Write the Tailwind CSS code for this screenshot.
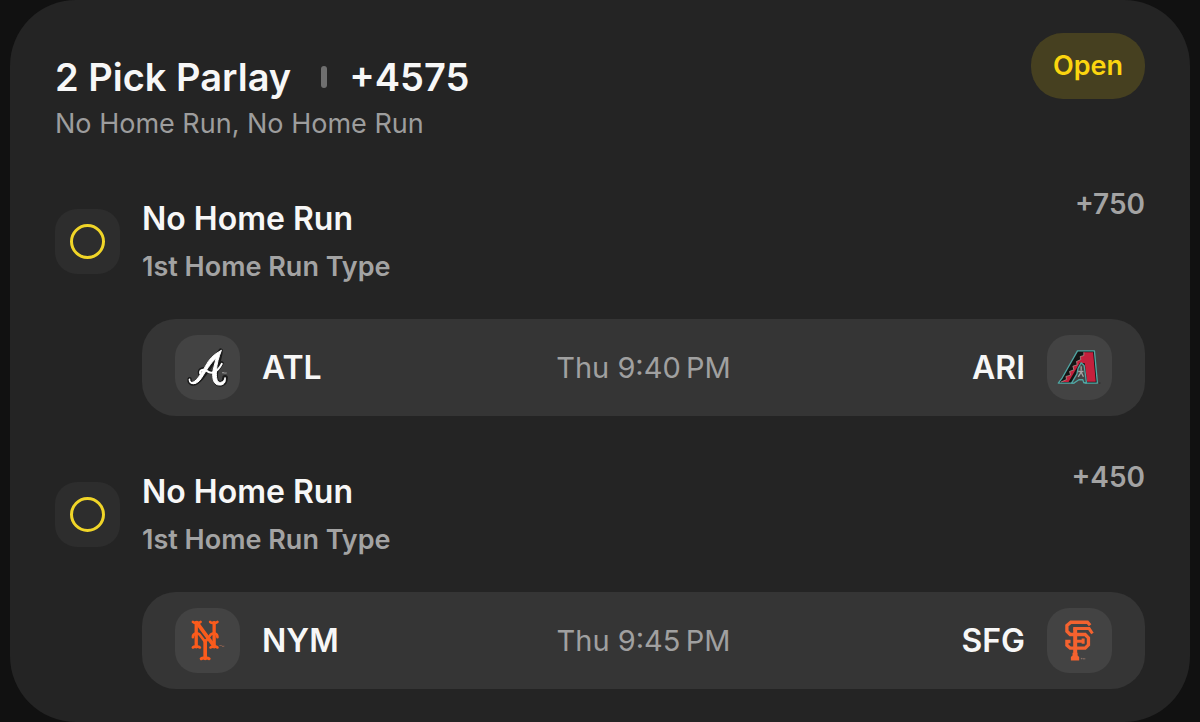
<!DOCTYPE html>
<html lang="en">
<head>
    <meta charset="utf-8">
    <meta name="viewport" content="width=device-width, initial-scale=1">
    <title>2 Pick Parlay</title>
    <script src="https://cdn.jsdelivr.net/npm/@tailwindcss/browser@4"></script>
</head>

<body class="bg-[#111111] px-[10px] font-['Inter',sans-serif] text-[#f7f7f7]">
<main class="rounded-[66px] bg-[#242424] px-[45px] pt-[33px] pb-[33px]">

    <header class="flex items-start justify-between">
        <div class="pt-5">
            <div class="flex items-center text-[38px] leading-[48px] font-semibold">
                <h1>2 Pick Parlay</h1>
                <span class="mr-[22px] ml-[30px] h-[22px] w-[6px] rounded-full bg-[#6f6f6f]"></span>
                <span>+4575</span>
            </div>
            <p class="text-[27px] leading-[46px] text-[#9d9d9d]">No Home Run, No Home Run</p>
        </div>
        <span class="rounded-[32px] bg-[#464020] px-[22px] text-[27px] leading-[66px] font-semibold text-[#fbd50f]">Open</span>
    </header>

    <section class="mt-10 flex gap-[22px]">
        <div class="mt-[22px] flex size-[65px] shrink-0 items-center justify-center rounded-[22px] bg-[#2d2d2d]">
            <span class="size-[35px] rounded-full border-3 border-[#f0d528]"></span>
        </div>
        <div class="flex-1">
            <div class="flex items-start justify-between">
                <div class="pt-2 leading-[48px] font-semibold">
                    <h2 class="text-[32px]">No Home Run</h2>
                    <p class="text-[27px] text-[#a3a3a3]">1st Home Run Type</p>
                </div>
                <span class="text-[28px] leading-[34px] font-semibold text-[#a3a3a3]">+750</span>
            </div>
            <div class="mt-7 grid grid-cols-3 items-center rounded-[34px] bg-[#353535] px-[33px] py-4">
                <div class="flex items-center gap-[22px]">
                    <!-- Atlanta -->
                    <svg class="size-[65px] rounded-[22px] bg-[#434343]" viewBox="14 14 196 196" role="img" aria-label="Atlanta" fill="none" stroke-linecap="round" stroke-linejoin="round">
                        <g stroke="#1b1b1b">
                            <path stroke-width="13" d="M58 147C56 160 68 163 77 158C95 149 120 108 152 61"/>
                            <path stroke-width="17" d="M149 69C145 91 134 118 135 139C136 155 143 163 153 161C161 159 165 151 165 143"/>
                            <path stroke-width="12" d="M89 130C86 118 101 112 111 121C123 132 141 127 155 99"/>
                        </g>
                        <g stroke="#ffffff" fill="#ffffff">
                            <path fill="none" stroke-width="4" d="M58 147C56 160 68 163 77 158"/>
                            <path stroke-width="3" d="M57 149C57 158 66 159 74 153C90 140 103 111 115 93C127 76 142 67 154 60C146 80 140 101 139 122C138 143 140 158 151 157C160 156 164 148 165 142C169 156 160 166 148 165C130 165 126 145 128 124L138 84C122 97 106 125 93 145C82 162 61 168 57 149Z"/>
                            <path fill="none" stroke-width="6" d="M90 131C87 119 101 115 111 123C123 133 142 127 155 101"/>
                        </g>
                        <path stroke="#a0a0a0" stroke-width="2" d="M157 127H161M159 127V130M164 130V127L166 129L168 127V130"/>
                    </svg>
                    <span class="text-[32px] font-semibold">ATL</span>
                </div>
                <time class="text-center text-[29px] text-[#a0a0a0]">Thu 9:40&#8239;PM</time>
                <div class="flex items-center justify-end gap-[22px]">
                    <span class="text-[32px] font-semibold">ARI</span>
                    <!-- Arizona -->
                    <svg class="size-[65px] rounded-[22px] bg-[#434343]" viewBox="14 14 196 196" role="img" aria-label="Arizona">
                        <path fill="#141414" stroke="#4fa5a2" stroke-width="4" stroke-linejoin="round" d="M48 159L60 143L106 62H157L166 159H130L122 148L116 142L107 144L94 159Z"/>
                        <path fill="#c4203c" d="M125 66H153L161 155H135L128 99L113 98L79 156H56L73 148L71 139L85 135L82 124L95 119L92 108L105 104L103 94L116 88L114 79L125 76Z"/>
                        <path fill="none" stroke="#b9a8a0" stroke-width="2" d="M56 156L73 148L71 139L85 135L82 124L95 119L92 108L105 104L103 94L116 88L114 79L125 76V66"/>
                        <path fill="#434343" stroke="#4fa5a2" stroke-width="4" stroke-linejoin="round" d="M117 98L126 106L133 158H125L122 149L110 149L95 159H88L104 132L108 114Z"/>
                        <path fill="none" stroke="#a3a3a3" stroke-width="4" d="M117 108V121M108 124H124M117 126L108 140M117 126L124 140"/>
                        <path fill="none" stroke="#181818" stroke-width="2" d="M171 159H175"/>
                    </svg>
                </div>
            </div>
        </div>
    </section>

    <section class="mt-11 flex gap-[22px]">
        <div class="mt-[22px] flex size-[65px] shrink-0 items-center justify-center rounded-[22px] bg-[#2d2d2d]">
            <span class="size-[35px] rounded-full border-3 border-[#f0d528]"></span>
        </div>
        <div class="flex-1">
            <div class="flex items-start justify-between">
                <div class="pt-2 leading-[48px] font-semibold">
                    <h2 class="text-[32px]">No Home Run</h2>
                    <p class="text-[27px] text-[#a3a3a3]">1st Home Run Type</p>
                </div>
                <span class="text-[28px] leading-[34px] font-semibold text-[#a3a3a3]">+450</span>
            </div>
            <div class="mt-7 grid grid-cols-3 items-center rounded-[34px] bg-[#353535] px-[33px] py-4">
                <div class="flex items-center gap-[22px]">
                    <!-- New York -->
                    <svg class="size-[65px] rounded-[22px] bg-[#434343]" viewBox="14 14 196 196" role="img" aria-label="New York" fill="none" stroke="#fa5b1c" stroke-linecap="round" stroke-linejoin="round">
                        <path stroke-width="10" d="M78 58V131M132 58V131"/>
                        <path stroke-width="11" d="M80 58L132 129"/>
                        <path stroke-width="8" d="M68 56Q72 60 78 58Q86 60 91 56M120 56Q125 60 132 58Q138 60 142 56M68 133Q72 129 78 131Q84 129 89 133M121 133Q126 129 132 131Q138 129 142 133"/>
                        <path stroke-width="8" d="M68 102C68 90 82 88 88 94L105 116L122 94C129 88 142 89 142 102"/>
                        <path stroke-width="11" d="M105 114V166"/>
                        <path stroke-width="9" d="M93 167Q98 163 105 166Q111 163 117 167"/>
                        <path stroke="#a36a55" stroke-width="2" d="M149 127H154M157 130V128L159 130L161 128V130"/>
                    </svg>
                    <span class="text-[32px] font-semibold">NYM</span>
                </div>
                <time class="text-center text-[29px] text-[#a0a0a0]">Thu 9:45&#8239;PM</time>
                <div class="flex items-center justify-end gap-[22px]">
                    <span class="text-[32px] font-semibold">SFG</span>
                    <!-- San Francisco -->
                    <svg class="size-[65px] rounded-[22px] bg-[#434343]" viewBox="14 14 196 196" role="img" aria-label="San Francisco" fill="none" stroke="#f4622f">
                        <path stroke-width="10" d="M144 66L136 57H86L74 67V84L84 94H129L139 104V125L129 135H84L74 126V115H85"/>
                        <path stroke-width="12" d="M99 170V76"/>
                        <path stroke-width="9" d="M93 76H141L151 91M100 114H124M123 106V122"/>
                        <path fill="#f4622f" stroke="none" d="M91 149H106V157L111 162V172H86V162L91 157Z"/>
                        <path stroke="#a08074" stroke-width="2" d="M116 166H121M119 166V169M124 169V166L126 168L128 166V169"/>
                    </svg>
                </div>
            </div>
        </div>
    </section>

</main>
</body>
</html>
